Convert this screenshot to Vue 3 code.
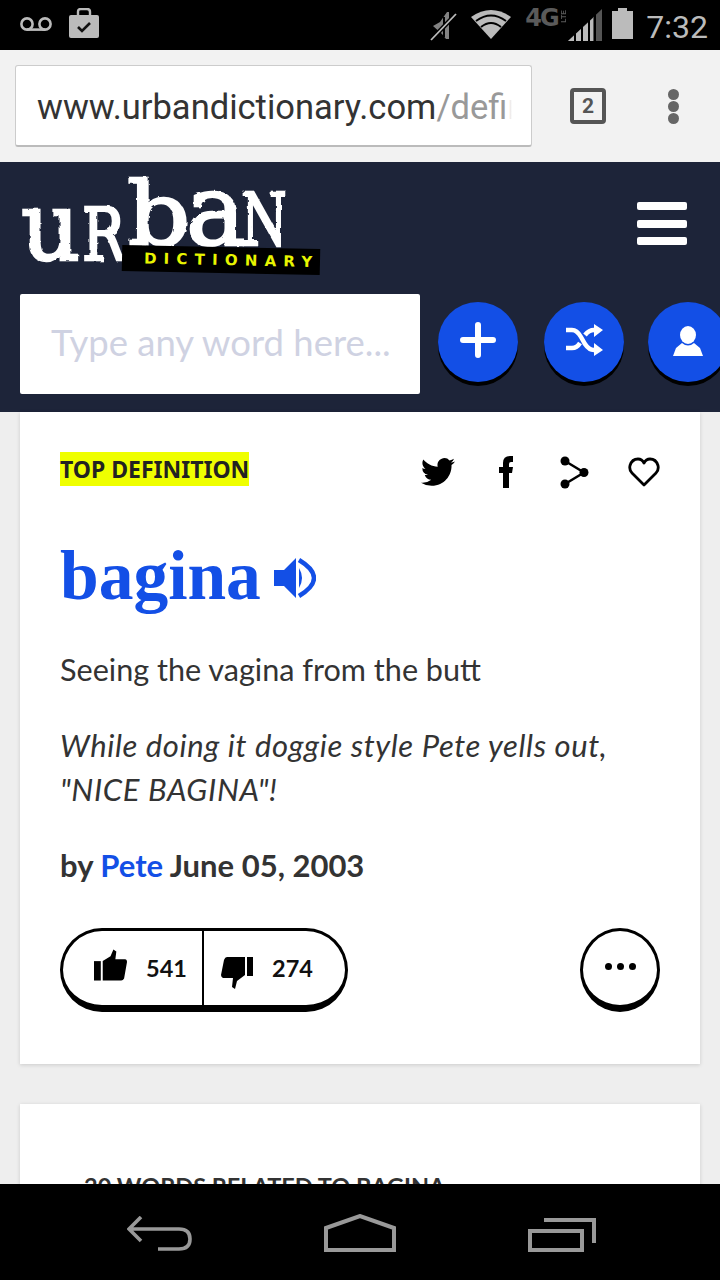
<script setup>
const svgFilterId = 'rough'
</script>

<template>
  <div class="screen">
    <svg class="defs" width="0" height="0" aria-hidden="true">
      <filter :id="svgFilterId" x="-5%" y="-5%" width="110%" height="110%">
        <feTurbulence type="fractalNoise" baseFrequency="0.14" numOctaves="2" seed="4" result="n" />
        <feDisplacementMap in="SourceGraphic" in2="n" scale="3" />
      </filter>
    </svg>

    <div class="status">
      <svg class="ic-vm" width="32" height="14" viewBox="0 0 32 14"><g fill="none" stroke="#bbb" stroke-width="2.6"><circle cx="7" cy="7" r="5.6"/><circle cx="25" cy="7" r="5.6"/><path d="M7 12.6h18"/></g></svg>
      <svg class="ic-bag" width="30" height="30" viewBox="0 0 30 30"><path d="M9 8V4q0-3 3-3h6q3 0 3 3v4" fill="none" stroke="#bbb" stroke-width="2.4"/><rect x="0" y="7" width="30" height="23" rx="2" fill="#bbb"/><path d="M9 19l4 4 8-8" fill="none" stroke="#111" stroke-width="2.6"/></svg>
      <div class="grow"></div>
      <svg class="ic-mute" width="27" height="30" viewBox="0 0 27 30"><path d="M3 15l7-4 7-10h2v27h-3l-4-5z" fill="#999" opacity=".85"/><path d="M14 6v20" stroke="#000" stroke-width="2"/><path d="M1 29L26 3" stroke="#000" stroke-width="4.5"/><path d="M1 29L26 3" stroke="#bbb" stroke-width="1.8"/></svg>
      <svg class="ic-wifi" width="40" height="29" viewBox="0 0 40 29"><path d="M20 29L0 7Q20-7 40 7z" fill="#bbb"/><g fill="none" stroke="#000" stroke-width="2"><path d="M5 11Q20 0 35 11"/><path d="M10 17Q20 9 30 17"/></g></svg>
      <div class="net"><span class="g4">4G</span><span class="lte">LTE</span></div>
      <svg class="ic-sig" width="34" height="32" viewBox="0 0 34 32"><path d="M0 32L34 0v32z" fill="#555"/><path d="M0 32L25 9v23z" fill="#bbb"/><g stroke="#000" stroke-width="2"><path d="M7 20v12M14 14v18M21 8v24M27 2v30"/></g></svg>
      <svg class="ic-bat" width="21" height="31" viewBox="0 0 21 31"><path d="M6 0h9v3h6v28H0V3h6z" fill="#bbb"/></svg>
      <span class="time">7:32</span>
    </div>

    <div class="toolbar">
      <div class="url"><span class="url-text">www.urbandictionary.com<span class="url-path">/define.php?term=bagina</span></span><i class="url-fade"></i></div>
      <div class="tabs">2</div>
      <div class="dots"><i></i><i></i><i></i></div>
    </div>

    <div class="page">
      <header class="head">
        <div class="head-top">
          <div class="logo">
            <div class="logo-word">
              <span class="l-u">u</span><span class="l-r">R</span><span class="l-b">b</span><span class="l-a">a</span><span class="l-n">N</span>
            </div>
            <div class="logo-band"><span>DICTIONARY</span></div>
          </div>
          <div class="burger"><i></i><i></i><i></i></div>
        </div>
        <div class="head-search">
          <div class="search">Type any word here...</div>
          <div class="round first">
            <svg width="36" height="36" viewBox="0 0 36 36"><path d="M18 3v30M3 18h30" stroke="#fff" stroke-width="6" stroke-linecap="round"/></svg>
          </div>
          <div class="round second">
            <svg width="38" height="32" viewBox="0 0 38 32"><g fill="none" stroke="#fff" stroke-width="4.5"><path d="M1 6h6q5 0 9 7l4 7q4 6 9 6h2"/><path d="M1 24h6q5 0 8-5M20 11q4-5 9-5h2"/></g><path d="M29 0l9 6-9 7zM29 19l9 7-9 6z" fill="#fff"/></svg>
          </div>
          <div class="round third">
            <svg width="30" height="30" viewBox="0 0 30 30"><ellipse cx="15" cy="9" rx="8" ry="9" fill="#fff"/><path d="M9 17q6 5 12 0l6 5 3 8H0l3-8z" fill="#fff"/></svg>
          </div>
        </div>
      </header>

      <main class="list">
        <article class="card">
          <div class="card-top">
            <span class="tag">TOP DEFINITION</span>
            <div class="shares">
              <svg class="s-tw" width="34" height="30" viewBox="0 1.5 24 21"><path d="M23.953 4.57a10 10 0 01-2.825.775 4.958 4.958 0 002.163-2.723c-.951.555-2.005.959-3.127 1.184a4.92 4.92 0 00-8.384 4.482C7.69 8.095 4.067 6.13 1.64 3.162a4.822 4.822 0 00-.666 2.475c0 1.71.87 3.213 2.188 4.096a4.904 4.904 0 01-2.228-.616v.06a4.923 4.923 0 003.946 4.827 4.996 4.996 0 01-2.212.085 4.936 4.936 0 004.604 3.417 9.867 9.867 0 01-6.102 2.105c-.39 0-.779-.023-1.17-.067a13.995 13.995 0 007.557 2.209c9.053 0 13.998-7.496 13.998-13.985 0-.21 0-.42-.015-.63A9.935 9.935 0 0024 4.59z" fill="#000"/></svg>
              <svg class="s-fb" width="14" height="32" viewBox="0 0 14 32"><path d="M4 32V17H0v-6h4V7q0-7 7-7h3v6h-2q-2 0-2 2v3h4l-1 6h-3v15z" fill="#000"/></svg>
              <svg class="s-sh" width="30" height="33" viewBox="0 0 30 33"><path d="M5 5l19 11.500L5 28" fill="none" stroke="#000" stroke-width="2.500"/><circle cx="5" cy="5" r="4.500"/><circle cx="5" cy="28" r="4.500"/><circle cx="24" cy="16.500" r="4.500"/></svg>
              <svg class="s-he" width="32" height="30" viewBox="0 0 32 30"><path d="M16 28L4 16Q1 13 2 8.500 4 2 10 2q4 0 6 4 2-4 6-4 6 0 8 6.500 1 4.500-2 7.500z" fill="none" stroke="#000" stroke-width="2.800" stroke-linejoin="round"/></svg>
            </div>
          </div>

          <h1 class="word">
            <span>bagina</span>
            <svg width="42" height="40" viewBox="0 0 42 40"><path d="M0 12h10L22 0v40L10 28H0z" fill="#134fe6"/><path d="M25 10q6 10 0 20z" fill="#134fe6"/><path d="M25 2q30 18 0 36" fill="none" stroke="#134fe6" stroke-width="4.500"/></svg>
          </h1>

          <p class="meaning">Seeing the vagina from the butt</p>
          <p class="example">While doing it doggie style Pete yells out,<br>"NICE BAGINA"!</p>
          <p class="byline">by <span class="author">Pete</span> June 05, 2003</p>

          <div class="actions">
            <div class="votes">
              <div class="vote up">
                <svg width="33" height="32" viewBox="0 0 34 32"><path d="M0 12h7v20H0z"/><path d="M9 32V12l8-5 3-7 3 2-1 8h10q2 0 2 3l-3 17q-1 2-3 2z"/></svg>
                <span>541</span>
              </div>
              <div class="vote down">
                <svg width="33" height="32" viewBox="0 0 33 32"><path d="M26 0h6v19h-6z"/><path d="M24 0v18l-8 6-2 8-3-2 1-9H2q-2-1-2-3l3-15q1-3 3-3z"/></svg>
                <span>274</span>
              </div>
            </div>
            <div class="more"><i></i><i></i><i></i></div>
          </div>
        </article>

        <section class="card related">
          <h2>20 WORDS RELATED TO BAGINA</h2>
        </section>
      </main>
    </div>

    <div class="navbar">
      <svg width="68" height="36" viewBox="0 0 68 36"><path d="M14 1L2 13l12 12M2 13h50q11 0 11 10t-11 10H31" fill="none" stroke="#999" stroke-width="3.600"/></svg>
      <svg width="72" height="38" viewBox="0 0 72 38"><path d="M2 14L36 2l34 12v22H2z" fill="none" stroke="#999" stroke-width="4"/></svg>
      <svg width="68" height="34" viewBox="0 0 68 34"><path d="M16 2h50v23" fill="none" stroke="#999" stroke-width="4"/><rect x="2" y="13" width="52" height="19" fill="none" stroke="#999" stroke-width="4"/></svg>
    </div>
  </div>
</template>

<style scoped>
.screen { width: 720px; height: 1280px; display: flex; flex-direction: column; overflow: hidden; background: #eee; font-family: Lato, "Noto Sans", sans-serif; }
.defs { position: absolute; }
.grow { flex: 1; }
.status { height: 50px; flex: none; background: #000; display: flex; align-items: flex-start; color: #bbb; }
.ic-vm { margin: 17px 0 0 20px; }
.ic-bag { margin: 8px 0 0 17px; }
.ic-mute { margin: 11px 0 0 0; }
.ic-wifi { margin: 10px 0 0 14px; }
.net { width: 42px; margin: 5px 0 0 14px; display: flex; align-items: flex-start; color: #5a5a5a; }
.g4 { font: bold 24px/26px "DejaVu Sans", sans-serif; letter-spacing: -2px; }
.lte { font: bold 7px/8px "Liberation Sans", sans-serif; writing-mode: vertical-rl; transform: rotate(180deg); margin: 5px 0 0 2px; }
.ic-sig { margin: 9px 0 0 1px; }
.ic-bat { margin: 8px 0 0 10px; }
.time { font: 32px/50px Roboto, sans-serif; margin: 2px 12px 0 13px; }

.toolbar { height: 112px; flex: none; background: #f2f2f2; display: flex; align-items: flex-start; }
.url { position: relative; width: 517px; height: 82px; margin: 15px 0 0 15px; box-sizing: border-box; background: #fff; border: 1px solid #ccc; border-bottom: 2px solid #bbb; border-radius: 3px; padding: 0 19px 0 21px; overflow: hidden; white-space: nowrap; font: 34.500px/82px Roboto, sans-serif; color: #333; }
.url-text { display: block; overflow: hidden; }
.url-path { color: #999; }
.url-fade { position: absolute; top: 0; bottom: 0; right: 19px; width: 8px; background: linear-gradient(to right, rgba(255,255,255,0), #fff); }
.tabs { width: 36px; height: 36px; box-sizing: border-box; margin: 38px 0 0 38px; border: 4px solid #555; border-radius: 4px; text-align: center; font: bold 21px/28px "Roboto", sans-serif; color: #555; }
.dots { display: flex; flex-direction: column; gap: 1px; margin: 39px 0 0 62px; }
.dots i { width: 11px; height: 11px; border-radius: 50%; background: #666; }

.page { flex: 1; min-height: 0; overflow: hidden; }
.head { height: 250px; background: #1d2439; box-sizing: border-box; overflow: hidden; }
.head-top { height: 132px; display: flex; justify-content: space-between; align-items: flex-start; padding-left: 20px; }
.logo { position: relative; width: 300px; height: 115px; }
.logo-word { display: flex; align-items: baseline; height: 100px; padding: 0 0 0 1px; color: #fff; font-family: "DejaVu Serif", serif; font-weight: normal; -webkit-text-stroke: 2.500px #fff; filter: url(#rough); line-height: 98px; }
.logo-word span { display: block; transform-origin: left bottom; white-space: nowrap; }
.l-u { width: 61px; font-size: 96px; transform: translateY(15px) scaleX(.96); }
.l-r { width: 45px; font-size: 72px; transform: translateY(15px) scaleX(.8); }
.l-b { width: 59px; font-size: 88px; transform: scaleX(1.12); }
.l-a { width: 55px; font-size: 100px; }
.l-n { width: 44px; font-size: 72px; transform: scaleX(.74); }
.logo-band { position: absolute; left: 102px; top: 85px; width: 198px; height: 26px; background: #000; transform: rotate(1.2deg); color: #e8f500; font: bold 15px/26px "DejaVu Sans", sans-serif; letter-spacing: 7.200px; padding-left: 22px; box-sizing: border-box; white-space: nowrap; overflow: hidden; }
.burger { display: flex; flex-direction: column; gap: 9.500px; margin: 40px 33px 0 0; }
.burger i { display: block; width: 50px; height: 8px; border-radius: 2px; background: #fff; }
.head-search { display: flex; align-items: flex-start; padding-left: 20px; }
.search { width: 400px; height: 100px; flex: none; box-sizing: border-box; background: #fff; border-radius: 2px; padding-left: 31px; font-size: 36.500px; line-height: 96px; color: #cfd2e2; white-space: nowrap; }
.round { width: 80px; height: 80px; flex: none; margin-top: 8px; border-radius: 50%; background: #134fe6; box-shadow: 0 4px 0 #000; display: flex; align-items: center; justify-content: center; }
.first { margin-left: 18px; }
.first svg { margin-top: -4px; }
.second { margin-left: 26px; }
.second svg { margin-top: -4px; }
.third { margin-left: 24px; padding-left: 0; }
.third svg { margin-top: -3px; }

.list { display: flex; flex-direction: column; gap: 40px; padding: 0 20px; }
.card { height: 652px; flex: none; background: #fff; box-shadow: 0 1px 4px rgba(0,0,0,.15); box-sizing: border-box; padding: 40px; color: #333; }
.card-top { display: flex; justify-content: space-between; align-items: flex-start; }
.tag { background: #efff00; font-family: "Noto Sans", sans-serif; font-weight: bold; font-size: 23px; line-height: 34px; color: #222; padding: 0; }
.shares { display: flex; align-items: center; height: 40px; }
.s-fb { margin-left: 44px; }
.s-sh { margin-left: 47px; }
.s-he { margin-left: 38px; }
.word { display: flex; align-items: center; gap: 13px; margin: 48px 0 0; height: 72px; font: bold 69.500px/72px "Liberation Serif", serif; color: #134fe6; }
.word svg { margin-top: 4px; }
.meaning { margin: 36px 0 0; font-size: 30.600px; line-height: 44px; color: #333; }
.example { margin: 31px 0 0; font-size: 31px; letter-spacing: .6px; line-height: 44px; font-style: italic; color: #333; }
.byline { margin: 32px 0 0; font-weight: bold; font-size: 31px; line-height: 44px; color: #333; }
.author { color: #134fe6; }
.actions { display: flex; justify-content: space-between; margin-top: 41px; }
.votes { width: 288px; height: 84px; box-sizing: border-box; display: flex; border: 3px solid #000; border-bottom-width: 7px; border-radius: 42px; }
.vote { display: flex; align-items: center; font-weight: bold; font-size: 23.500px; color: #111; height: 74px; }
.up { width: 141px; padding-left: 31px; gap: 19px; box-sizing: border-box; border-right: 2px solid #000; }
.up svg { margin-top: -6px; }
.down { padding-left: 17px; gap: 18px; }
.down svg { margin-top: 10px; }
.vote svg { flex: none; }
.more { width: 80px; height: 84px; box-sizing: border-box; border: 3px solid #000; border-bottom-width: 7px; border-radius: 50%; display: flex; align-items: center; justify-content: center; gap: 5px; padding-bottom: 4px; }
.more i { width: 7px; height: 7px; border-radius: 50%; background: #000; }
.related { height: 300px; padding: 69px 64px; }
.related h2 { margin: 0; font-size: 23.500px; line-height: 26px; font-weight: bold; color: #333; white-space: nowrap; }

.navbar { position: relative; height: 96px; flex: none; background: #000; display: flex; align-items: flex-start; }
.navbar svg:nth-child(1) { margin: 32px 0 0 127px; }
.navbar svg:nth-child(2) { margin: 30px 0 0 129px; }
.navbar svg:nth-child(3) { margin: 34px 0 0 132px; }
</style>

<style>
html, body { margin: 0; background: #000; }
</style>
